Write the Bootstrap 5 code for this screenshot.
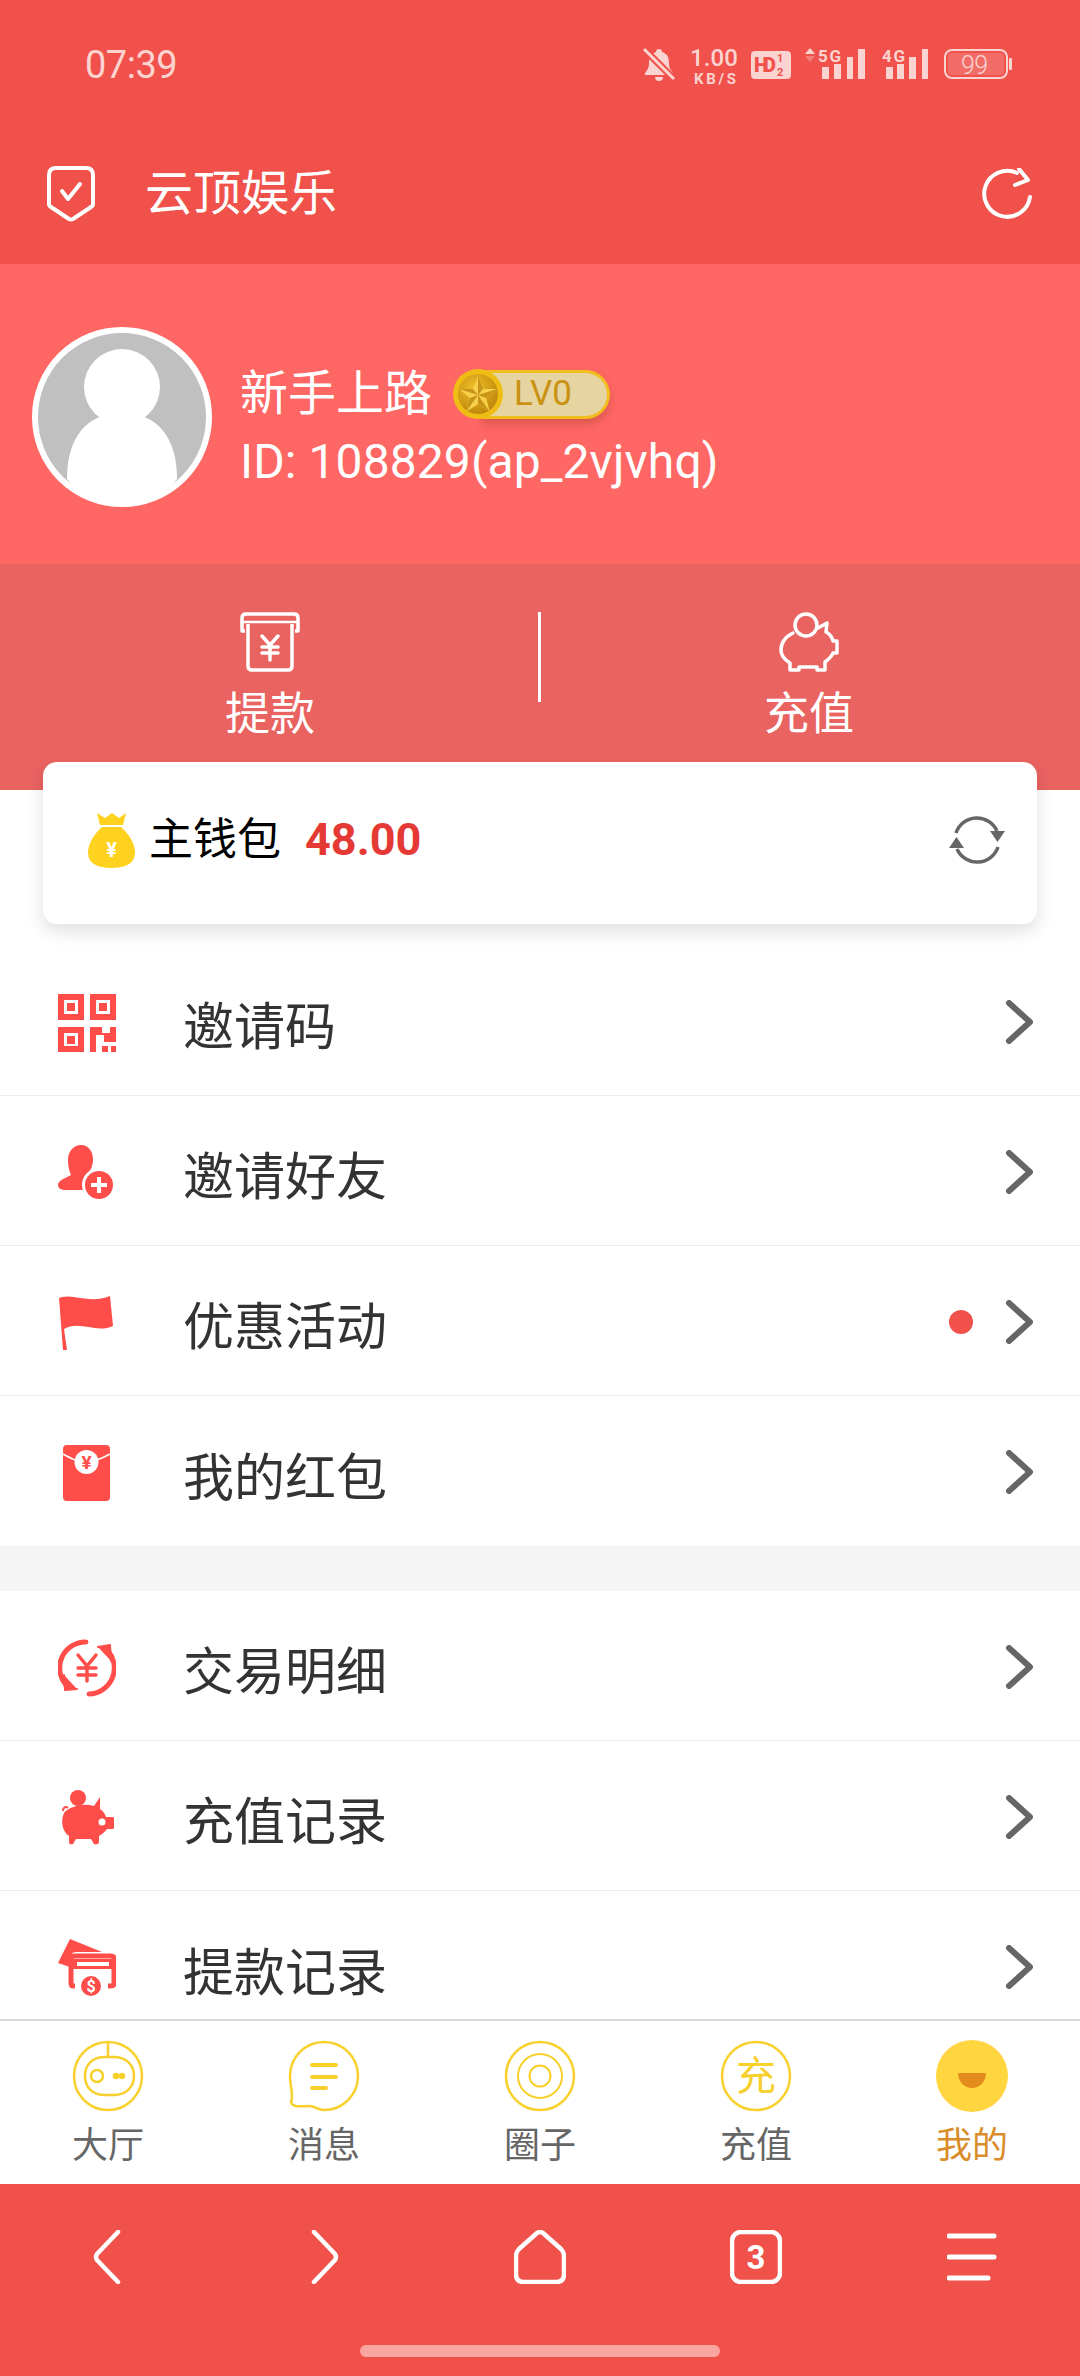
<!DOCTYPE html>
<html lang="zh-CN">
<head>
    <meta charset="UTF-8">
    <meta name="viewport" content="width=device-width, initial-scale=1.0">
    <title>云顶娱乐</title>
    <link href="https://cdn.jsdelivr.net/npm/bootstrap@5.3.0/dist/css/bootstrap.min.css" rel="stylesheet">
    <style>
        html, body { margin: 0; height: 2376px; overflow: hidden; }
        body { font-family: Roboto, "Noto Sans CJK SC", sans-serif; background: #fff; }
        svg { display: block; flex-shrink: 0; }
        .page-wrap { width: 1080px; height: 2376px; }
        .status-area { height: 110px; background: #f0514a; padding: 20px 68px 0 85px; color: #fbd3d0; }
        .status-time { font-size: 38px; letter-spacing: -.5px; }
        .top-bar { height: 154px; background: #f0514a; color: #fff; padding: 14px 47px 0 47px; }
        .top-title { font-size: 48px; line-height: 1; margin-left: 50px; }
        .profile-area { height: 300px; background: #ff6764; padding: 63px 32px 0; color: #fff; }
        .avatar-ring { width: 180px; height: 180px; }
        .profile-text { margin: 39px 0 0 28px; }
        .profile-name { font-size: 48px; line-height: 56px; }
        .profile-id { font-size: 48px; line-height: 56px; margin-top: 12px; letter-spacing: .1px; }
        .level-badge { margin-left: 20px; height: 54px; }
        .level-pill { height: 49px; width: 128px; margin-left: -22px; padding-left: 32px; border: 3px solid #f1bd1f; border-left: 0; border-radius: 0 25px 25px 0; background: #e6d5a0; color: #c99212; font-size: 35px; line-height: 42px; box-shadow: 0 5px 8px rgba(150, 60, 40, .35); }
        .action-band { height: 226px; background: #e96361; color: #fff; padding-top: 48px; }
        .action-item { width: 540px; }
        .action-label { font-size: 45px; line-height: 50px; margin-top: 18px; }
        .action-rule { width: 3px; height: 90px; background: #fff; margin: 0 -2px; }
        .wallet-box { margin: -28px 43px 0; height: 162px; border: 0; border-radius: 14px; padding: 50px 31px 0 45px; box-shadow: 0 8px 18px rgba(0, 0, 0, .12); }
        .wallet-name { font-size: 44px; line-height: 54px; margin-left: 14px; color: #000; }
        .wallet-money { font-size: 45px; font-weight: 700; line-height: 54px; margin-left: 24px; color: #e53935; }
        .list-area { margin-top: 22px; height: 1073px; overflow: hidden; }
        .menu-row { height: 150px; padding: 2px 47px 0 58px; border-color: #eee; }
        .menu-icon { width: 58px; margin-top: 2px; }
        .menu-text { font-size: 51px; margin: 12px 0 0 67px; color: #333; line-height: 1; }
        .menu-dot { width: 24px; height: 24px; background: #f0514a; margin-right: 32px; }
        .section-gap { height: 45px; background: #f5f5f5; }
        .tab-bar { height: 165px; background: #fff; border-top: 2px solid #d9d9d9; padding-top: 19px; }
        .tab-item { width: 216px; color: #666; }
        .tab-item.is-on { color: #d98d2a; }
        .tab-label { font-size: 36px; line-height: 44px; margin-top: 12px; }
        .browser-bar { height: 192px; background: #f0514a; padding-top: 46px; }
        .browser-slot { width: 216px; }
        .home-pill { width: 360px; height: 12px; background: #f9a5a0; border-radius: 6px; margin: 61px auto 0; }
    </style>
</head>
<body>
<svg width="0" height="0" class="position-absolute">
    <symbol id="chev" viewBox="0 0 28 44"><path d="M4 3 25 22 4 41" fill="none" stroke="#666" stroke-width="6" stroke-linecap="round" stroke-linejoin="round"/></symbol>
</svg>
<div class="page-wrap d-flex flex-column">
    <div class="status-area d-flex align-items-center justify-content-between">
        <span class="status-time">07:39</span>
        <svg width="372" height="50" viewBox="640 40 372 50" fill="#fbd3d0" font-family="Roboto, sans-serif">
            <path d="M659 49c2 0 3 1 3 3 6 2 7 6 7 12 0 4 2 6 4 9v2h-28v-2c2-3 4-5 4-9 0-6 1-10 7-12 0-2 1-3 3-3zM655 77h8c0 3-2 4-4 4s-4-1-4-4z"/>
            <path d="M644 49 674 79" stroke="#f0514a" stroke-width="7"/>
            <path d="M644 49 674 79" stroke="#fbd3d0" stroke-width="3"/>
            <text x="690" y="66" font-size="24" font-weight="500" textLength="48">1.00</text>
            <text x="694" y="84" font-size="15" font-weight="700" textLength="42">KB/S</text>
            <rect x="751" y="51" width="40" height="28" rx="4"/>
            <text x="754" y="72" font-size="20" font-weight="900" fill="#f0514a" textLength="22">HD</text>
            <text x="777" y="62" font-size="11" font-weight="700" fill="#f0514a">1</text>
            <text x="777" y="76" font-size="11" font-weight="700" fill="#f0514a">2</text>
            <path d="M810 48 815 54H805z"/>
            <path d="M810 62 815 56H805z" opacity=".35"/>
            <text x="818" y="62" font-size="17" font-weight="700" textLength="23">5G</text>
            <rect x="822" y="67" width="7" height="12"/><rect x="834" y="64" width="7" height="15"/><rect x="847" y="57" width="6" height="22"/><rect x="858" y="49" width="7" height="30"/>
            <text x="882" y="62" font-size="17" font-weight="700" textLength="23">4G</text>
            <rect x="886" y="67" width="7" height="12"/><rect x="897" y="64" width="7" height="15"/><rect x="909" y="57" width="7" height="22"/><rect x="922" y="49" width="6" height="30"/>
            <rect x="945" y="50" width="62" height="28" rx="7" fill="none" stroke="#fbd3d0" stroke-width="2"/>
            <rect x="948" y="53" width="56" height="22" rx="4" fill="#fbd3d0" opacity=".22"/>
            <rect x="1009" y="58" width="3" height="12" rx="1"/>
            <text x="961" y="74" font-size="25" font-weight="300" textLength="27">99</text>
        </svg>
    </div>

    <div class="top-bar d-flex align-items-center justify-content-between">
        <div class="d-flex align-items-center">
            <svg width="48" height="56" viewBox="0 0 48 56" fill="none" stroke="#fff" stroke-width="4" stroke-linejoin="round" stroke-linecap="round"><path d="M9 2H39Q46 2 46 9V38Q46 40 44 41L26 53Q24 54 22 53L4 41Q2 40 2 38V9Q2 2 9 2Z"/><path d="M15 25 21 33 33 18"/></svg>
            <span class="top-title">云顶娱乐</span>
        </div>
        <svg width="52" height="52" viewBox="0 0 52 52" fill="none" stroke="#fff" stroke-width="4" stroke-linecap="round" stroke-linejoin="round"><path d="M49 29A23 23 0 1 1 36 5"/><path d="M34 17 47 12 38 1"/></svg>
    </div>

    <div class="profile-area d-flex align-items-start">
        <svg class="avatar-ring" viewBox="0 0 180 180"><circle cx="90" cy="90" r="87" fill="#c0c0c0" stroke="#fff" stroke-width="6"/><ellipse cx="90" cy="60" rx="38" ry="38" fill="#fff"/><path d="M35 152C35 110 55 86 90 86S145 110 145 152C132 170 112 178 90 178S48 170 35 152Z" fill="#fff"/></svg>
        <div class="profile-text">
            <div class="d-flex align-items-center">
                <span class="profile-name">新手上路</span>
                <div class="level-badge d-flex align-items-center">
                    <svg width="52" height="54" viewBox="0 0 52 54" class="position-relative z-1">
                        <defs><radialGradient id="coinFill" cx=".4" cy=".35" r=".8"><stop offset="0" stop-color="#f0c028"/><stop offset="1" stop-color="#b67d06"/></radialGradient></defs>
                        <circle cx="26" cy="27" r="25" fill="#f0bd14"/><circle cx="26" cy="27" r="20" fill="url(#coinFill)"/>
                        <path d="M26 9 31 22 45 22 34 31 38 45 26 37 14 45 18 31 7 22 21 22Z" fill="#f7d04a"/>
                        <path d="M26 28 26 9 31 22ZM26 28 45 22 34 31ZM26 28 38 45 26 37ZM26 28 14 45 18 31ZM26 28 7 22 21 22Z" fill="#b47c06" opacity=".7"/>
                    </svg>
                    <div class="level-pill">LV0</div>
                </div>
            </div>
            <div class="profile-id">ID: 108829(ap_2vjvhq)</div>
        </div>
    </div>

    <div class="action-band d-flex align-items-start">
        <div class="action-item d-flex flex-column align-items-center">
            <svg width="60" height="60" viewBox="0 0 60 60" fill="none" stroke="#fff" stroke-width="3.500" stroke-linejoin="round"><path d="M5 19H2V6Q2 2 6 2H54Q58 2 58 6V19H55"/><path d="M2 10H58" stroke-width="2.500"/><path d="M8 12V54Q8 58 12 58H48Q52 58 52 54V12"/><path d="M22 24 30 33 38 24M30 33V48M22 35H38M22 41H38" stroke-linecap="round"/></svg>
            <div class="action-label">提款</div>
        </div>
        <div class="action-rule"></div>
        <div class="action-item d-flex flex-column align-items-center">
            <svg width="60" height="60" viewBox="0 0 60 60" fill="none" stroke="#fff" stroke-width="3.500" stroke-linejoin="round" stroke-linecap="round"><circle cx="27" cy="13" r="11"/><path d="M14 21C6 25 2 31 2 38 2 44 6 48 11 51V58H20V55H38V58H46V50C50 47 53 44 54 41H58V29H54C53 25 51 22 47 20L48 11 39 16"/></svg>
            <div class="action-label">充值</div>
        </div>
    </div>

    <div class="card wallet-box position-relative d-block">
        <div class="d-flex align-items-center">
            <svg width="47" height="56" viewBox="0 0 47 56"><path d="M9 1 17 6 24 1 31 6 38 1 35 13H12Z" fill="#ffd21f"/><path d="M14 15H33C43 24 47 33 47 41 47 51 38 56 23.500 56S0 51 0 41C0 33 4 24 14 15Z" fill="#ffd21f"/><text x="23.500" y="45" font-size="20" font-weight="700" fill="#fff" text-anchor="middle">¥</text></svg>
            <span class="wallet-name">主钱包</span>
            <span class="wallet-money">48.00</span>
            <svg class="ms-auto" width="58" height="50" viewBox="0 0 58 50" fill="none" stroke="#666" stroke-width="3.500"><path d="M8 18A22 22 0 0 1 49 16"/><path d="M50 32A22 22 0 0 1 9 34"/><path d="M42 16H57L49.500 27Z" fill="#666" stroke="none"/><path d="M1 33H16L8.500 22Z" fill="#666" stroke="none"/></svg>
        </div>
    </div>

    <div class="list-area flex-grow-1">
        <div class="list-group list-group-flush">
            <div class="list-group-item menu-row d-flex align-items-center">
                <svg class="menu-icon" width="58" height="58" viewBox="0 0 58 58" fill="#ff4d4a"><path fill-rule="evenodd" d="M0 0H26V26H0ZM6 6V20H20V6ZM32 0H58V26H32ZM38 6V20H52V6ZM0 33H26V58H0ZM6 39V52H20V39Z"/><rect x="9" y="9" width="8" height="8"/><rect x="41" y="9" width="8" height="8"/><rect x="9" y="42" width="8" height="8"/><path d="M32 33H44V39H52V33H58V48H46V41H38V58H32ZM44 52H50V58H44ZM53 52H58V58H53Z"/></svg>
                <span class="menu-text">邀请码</span>
                <svg class="ms-auto" width="28" height="44"><use href="#chev"/></svg>
            </div>
            <div class="list-group-item menu-row d-flex align-items-center">
                <svg class="menu-icon" width="58" height="58" viewBox="0 0 58 58" fill="#ff4d4a"><path d="M23 1C31 1 35 8 35 16 35 22 32 27 30 30V46H8C3 46 0 44 0 41 0 36 8 34 13 31 11 27 10 22 10 16 10 8 15 1 23 1Z"/><circle cx="41" cy="41" r="17" fill="#fff"/><circle cx="41" cy="41" r="14"/><path d="M41 33V49M33 41H49" stroke="#fff" stroke-width="4"/></svg>
                <span class="menu-text">邀请好友</span>
                <svg class="ms-auto" width="28" height="44"><use href="#chev"/></svg>
            </div>
            <div class="list-group-item menu-row d-flex align-items-center">
                <svg class="menu-icon" width="58" height="58" viewBox="0 0 58 58" fill="#ff4d4a"><path d="M1 4 4 3C18 0 32 10 52 2L55 32C38 40 22 26 6 35L9 56H5Z"/></svg>
                <span class="menu-text">优惠活动</span>
                <span class="menu-dot rounded-circle ms-auto"></span>
                <svg width="28" height="44"><use href="#chev"/></svg>
            </div>
            <div class="list-group-item menu-row d-flex align-items-center border-0">
                <svg class="menu-icon" width="58" height="58" viewBox="0 0 58 58"><rect x="5" y="1" width="47" height="56" rx="4" fill="#ff4d4a"/><path d="M5 10C14 15 20 18 28 18S43 15 52 10" fill="none" stroke="#fff" stroke-width="1.500"/><circle cx="28.500" cy="18" r="12" fill="#fff"/><text x="28.500" y="25" font-size="19" font-weight="700" fill="#ff4d4a" text-anchor="middle">¥</text></svg>
                <span class="menu-text">我的红包</span>
                <svg class="ms-auto" width="28" height="44"><use href="#chev"/></svg>
            </div>
        </div>
        <div class="section-gap"></div>
        <div class="list-group list-group-flush">
            <div class="list-group-item menu-row d-flex align-items-center">
                <svg class="menu-icon" width="58" height="58" viewBox="0 0 58 58" fill="none" stroke="#ff4d4a" stroke-width="5" stroke-linecap="round"><path d="M28 3A26 26 0 0 0 8 46"/><path d="M31 55A26 26 0 0 0 50 12"/><path d="M6 36 7 51 19 50" fill="#ff4d4a" stroke-width="2" stroke-linejoin="round"/><path d="M53 22 52 6 40 8" fill="#ff4d4a" stroke-width="2" stroke-linejoin="round"/><path d="M20 16 29 27 38 16M29 27V42M20 29H38M20 36H38" stroke-width="3.500"/></svg>
                <span class="menu-text">交易明细</span>
                <svg class="ms-auto" width="28" height="44"><use href="#chev"/></svg>
            </div>
            <div class="list-group-item menu-row d-flex align-items-center">
                <svg class="menu-icon" width="58" height="58" viewBox="0 0 58 58" fill="#ff4d4a"><circle cx="20" cy="9" r="8"/><path d="M5 22C5 18 8 17 10 19" fill="none" stroke="#ff4d4a" stroke-width="2"/><path d="M6 24C12 17 26 14 36 17L42 8 42 20C46 23 47 25 48 28H55C56 28 56 30 56 31V38C56 40 55 40 54 40H49C47 43 44 45 41 47V53C41 55 38 56 36 55L33 50H18L15 55C13 56 11 55 11 53V47C5 43 2 33 6 24Z"/><circle cx="44" cy="33" r="3.500" fill="#fff"/></svg>
                <span class="menu-text">充值记录</span>
                <svg class="ms-auto" width="28" height="44"><use href="#chev"/></svg>
            </div>
            <div class="list-group-item menu-row d-flex align-items-center">
                <svg class="menu-icon" width="58" height="58" viewBox="0 0 58 58"><path d="M12 0 44 13H18C14 13 12 16 12 19V28L0 24Z" fill="#ff4d4a"/><path d="M17 47H15C14 47 13 46 13 44V20C13 18 14 17 16 17H53C55 17 56 18 56 20V44C56 46 55 47 53 47H50" fill="none" stroke="#ff4d4a" stroke-width="5"/><rect x="15" y="20" width="39" height="10" fill="#ff4d4a"/><rect x="19" y="23" width="32" height="4" fill="#fff"/><circle cx="33" cy="47" r="10" fill="#ff4d4a"/><text x="33" y="53" font-size="16" font-weight="700" fill="#fff" text-anchor="middle">$</text></svg>
                <span class="menu-text">提款记录</span>
                <svg class="ms-auto" width="28" height="44"><use href="#chev"/></svg>
            </div>
        </div>
    </div>

    <div class="tab-bar d-flex">
        <div class="tab-item d-flex flex-column align-items-center">
            <svg width="72" height="72" viewBox="0 0 72 72" fill="none" stroke="#f8d02c" stroke-width="2.500"><circle cx="36" cy="36" r="34"/><path d="M36 2V17H33C20 17 13 25 13 36S20 55 33 55H42C54 55 62 47 62 36S54 17 42 17H36"/><circle cx="25" cy="36" r="6"/><circle cx="44" cy="36" r="2" fill="#f8d02c"/><circle cx="50" cy="36" r="2" fill="#f8d02c"/></svg>
            <div class="tab-label">大厅</div>
        </div>
        <div class="tab-item d-flex flex-column align-items-center">
            <svg width="72" height="72" viewBox="0 0 72 72" fill="none" stroke="#f8d02c" stroke-width="2.500"><path d="M36 2A34 34 0 1 1 36 70C30 70 27 66 21 66 14 66 4 68 3 62 6 56 2 46 2 36A34 34 0 0 1 36 2Z"/><path d="M24 25H48M24 37H48M24 48H38" stroke-width="4" stroke-linecap="round"/></svg>
            <div class="tab-label">消息</div>
        </div>
        <div class="tab-item d-flex flex-column align-items-center">
            <svg width="72" height="72" viewBox="0 0 72 72" fill="none" stroke="#f8d02c" stroke-width="2"><circle cx="36" cy="36" r="34" stroke-width="2.500"/><circle cx="36" cy="36" r="22"/><circle cx="36" cy="36" r="10.500"/></svg>
            <div class="tab-label">圈子</div>
        </div>
        <div class="tab-item d-flex flex-column align-items-center">
            <svg width="72" height="72" viewBox="0 0 72 72" fill="none" stroke="#f8d02c" stroke-width="2.500"><circle cx="36" cy="36" r="34"/><text x="36" y="50" font-size="40" fill="#f8d02c" stroke="none" text-anchor="middle" font-family="Noto Sans CJK SC">充</text></svg>
            <div class="tab-label">充值</div>
        </div>
        <div class="tab-item is-on d-flex flex-column align-items-center">
            <svg width="72" height="72" viewBox="0 0 72 72"><circle cx="36" cy="36" r="36" fill="#ffd540"/><path d="M22 33H50C50 42 43 48 36 48S22 42 22 33Z" fill="#e38b1d"/></svg>
            <div class="tab-label">我的</div>
        </div>
    </div>

    <div class="browser-bar">
        <div class="d-flex">
            <div class="browser-slot d-flex justify-content-center"><svg width="52" height="54" viewBox="0 0 52 54" fill="none" stroke="#fff" stroke-width="4.500" stroke-linecap="round" stroke-linejoin="round"><path d="M36 2 15 24Q13 27 15 30L36 52"/></svg></div>
            <div class="browser-slot d-flex justify-content-center"><svg width="52" height="54" viewBox="0 0 52 54" fill="none" stroke="#fff" stroke-width="4.500" stroke-linecap="round" stroke-linejoin="round"><path d="M16 2 37 24Q39 27 37 30L16 52"/></svg></div>
            <div class="browser-slot d-flex justify-content-center"><svg width="52" height="54" viewBox="0 0 52 54" fill="none" stroke="#fff" stroke-width="4.500" stroke-linejoin="round"><path d="M23 3Q26 1 29 3L47 19Q50 22 50 26V44Q50 52 42 52H10Q2 52 2 44V26Q2 22 5 19Z"/></svg></div>
            <div class="browser-slot d-flex justify-content-center"><svg width="52" height="54" viewBox="0 0 52 54"><rect x="2" y="2" width="48" height="50" rx="9" fill="none" stroke="#fff" stroke-width="4.500"/><text x="26" y="39" font-size="33" font-weight="700" fill="#fff" text-anchor="middle" font-family="Roboto, sans-serif">3</text></svg></div>
            <div class="browser-slot d-flex justify-content-center"><svg width="50" height="54" viewBox="0 0 50 54" stroke="#fff" stroke-width="5" stroke-linecap="round"><path d="M2 6H47M2 27H47M2 48H41"/></svg></div>
        </div>
        <div class="home-pill"></div>
    </div>
</div>
</body>
</html>
